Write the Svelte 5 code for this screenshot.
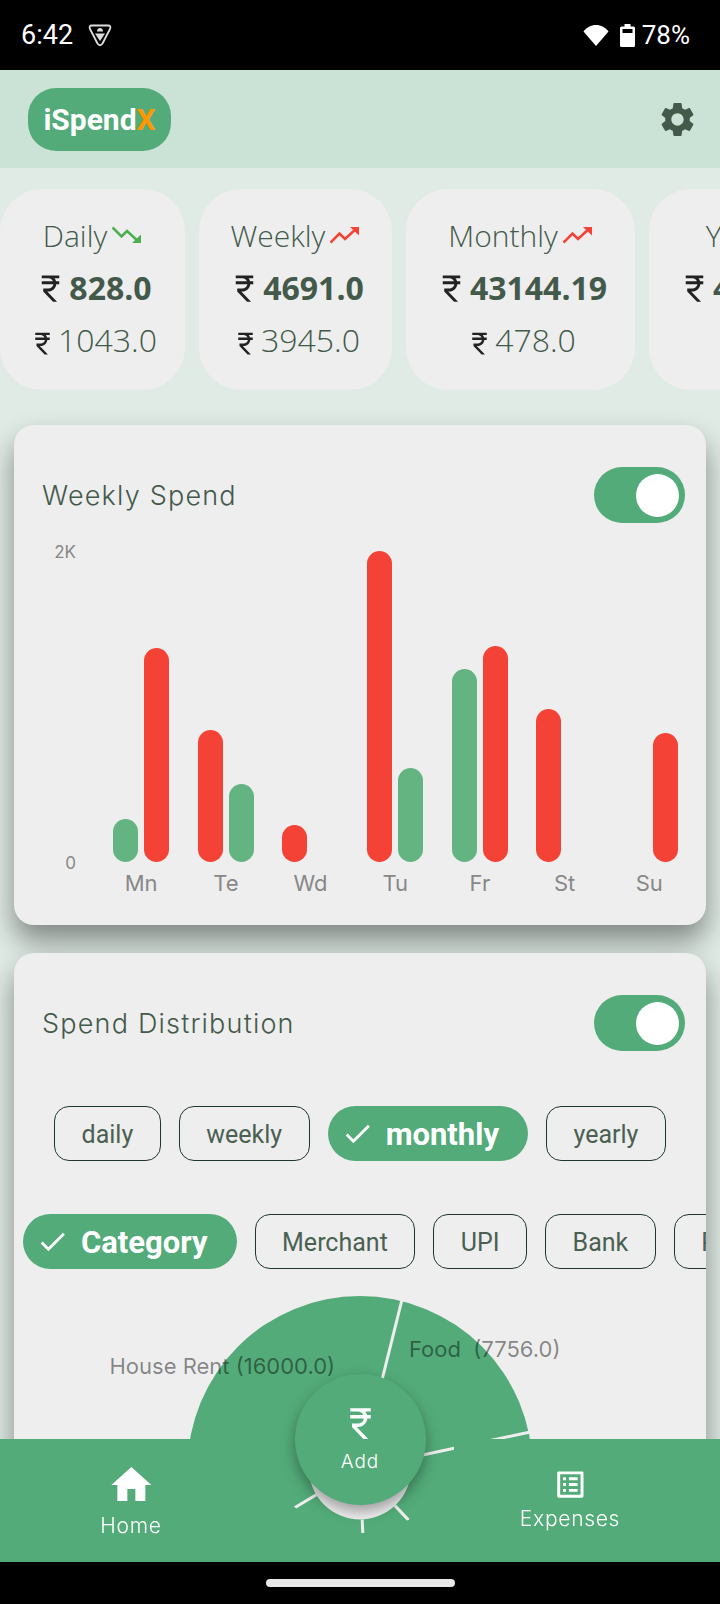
<script lang="ts">
	const stats = [
		{ name: 'Daily', value: '828.0', prev: '1043.0', up: false, width: 185 },
		{ name: 'Weekly', value: '4691.0', prev: '3945.0', up: true, width: 193 },
		{ name: 'Monthly', value: '43144.19', prev: '478.0', up: true, width: 229 },
		{ name: 'Yearly', value: '43144.19', prev: '0.0', up: true, width: 229 }
	];

	// pixel heights of [first, second] bar; null = no bar drawn
	const days = [
		{ label: 'Mn', bars: [{ h: 43, c: 'g' }, { h: 214, c: 'r' }] },
		{ label: 'Te', bars: [{ h: 132, c: 'r' }, { h: 78, c: 'g' }] },
		{ label: 'Wd', bars: [{ h: 37, c: 'r' }, null] },
		{ label: 'Tu', bars: [{ h: 311, c: 'r' }, { h: 94, c: 'g' }] },
		{ label: 'Fr', bars: [{ h: 193, c: 'g' }, { h: 216, c: 'r' }] },
		{ label: 'St', bars: [{ h: 153, c: 'r' }, null] },
		{ label: 'Su', bars: [null, { h: 129, c: 'r' }] }
	];

	const periods = ['daily', 'weekly', 'monthly', 'yearly'];
	const groups = ['Category', 'Merchant', 'UPI', 'Bank', 'Payment'];

	// pie spokes, as directions from the centre
	const spokes = [
		[41.7, -167.7],
		[170, -36.5],
		[48, 51],
		[2.5, 58],
		[-65, 39]
	];
	const cx = 346;
	const cy = 172.5;
	function spoke(d: number[], r: number) {
		const len = Math.hypot(d[0], d[1]);
		return { x: cx + (d[0] / len) * r, y: cy + (d[1] / len) * r };
	}
</script>

{#snippet rupee(size)}
	<svg class="rupee" width={size} height={size} viewBox="0 0 24 24" fill="currentColor">
		<path d="M13.66 7C13.1 5.82 11.9 5 10.5 5H6V3h12v2h-3.26c.48.58.84 1.26 1.05 2H18v2h-2.02c-.25 2.8-2.61 5-5.48 5h-.73l6.73 7h-2.77L7 14v-2h3.5c1.76 0 3.22-1.31 3.46-3H6V7h7.66z" />
	</svg>
{/snippet}

{#snippet check()}
	<svg class="check" width="33" height="33" viewBox="0 0 24 24" fill="#fff">
		<path d="M9 16.17L4.83 12l-1.42 1.41L9 19 21 7l-1.41-1.41z" />
	</svg>
{/snippet}

{#snippet toggle()}
	<div class="toggle"><span class="knob"></span></div>
{/snippet}

<div class="phone">
	<div class="status">
		<div class="status-left">
			<span class="clock">6:42</span>
			<svg width="24" height="24" viewBox="0 0 24 24" fill="none" stroke="#ddd" stroke-width="1.8" stroke-linejoin="round">
				<path d="M4 2.5H20Q23.5 2.5 22 6L14.5 20.5Q12 24 9.5 20.5L2 6Q0.5 2.5 4 2.5Z" />
				<path d="M7 10.5h10L12 18z" fill="#ddd" stroke="none" />
				<path d="M9 8.5Q9 5 12 5t3 3.5z" fill="#ddd" stroke="none" />
			</svg>
		</div>
		<div class="status-right">
			<svg width="26" height="21" viewBox="0 0 26 21" fill="#fff">
				<path d="M13 21 0.5 6.5C3.5 2.5 8 0 13 0s9.5 2.5 12.5 6.5z" />
			</svg>
			<svg class="battery" width="15" height="23" viewBox="0 0 15 23">
				<path d="M4.5 0h6v2.5h3a1.5 1.5 0 0 1 1.5 1.5v17.5a1.5 1.5 0 0 1-1.5 1.5h-12A1.5 1.5 0 0 1 0 21.5V4a1.5 1.5 0 0 1 1.5-1.5h3z" fill="#fff" />
				<rect x="2.5" y="5" width="10" height="4" fill="#000" />
			</svg>
			<span class="pct">78%</span>
		</div>
	</div>

	<header class="header">
		<div class="logo">iSpend<span>X</span></div>
		<svg class="gear" width="41" height="41" viewBox="0 0 24 24" fill="currentColor">
			<path d="M19.14 12.94c.04-.3.06-.61.06-.94 0-.32-.02-.64-.07-.94l2.03-1.58c.18-.14.23-.41.12-.61l-1.92-3.32c-.12-.22-.37-.29-.59-.22l-2.39.96c-.5-.38-1.03-.7-1.62-.94l-.36-2.54c-.04-.24-.24-.41-.48-.41h-3.84c-.24 0-.43.17-.47.41l-.36 2.54c-.59.24-1.13.57-1.62.94l-2.39-.96c-.22-.08-.47 0-.59.22L2.74 8.87c-.12.21-.08.47.12.61l2.03 1.58c-.05.3-.09.63-.09.94s.02.64.07.94l-2.03 1.58c-.18.14-.23.41-.12.61l1.92 3.32c.12.22.37.29.59.22l2.39-.96c.5.38 1.03.7 1.62.94l.36 2.54c.05.24.24.41.48.41h3.84c.24 0 .44-.17.47-.41l.36-2.54c.59-.24 1.13-.56 1.62-.94l2.39.96c.22.08.47 0 .59-.22l1.92-3.32c.12-.22.07-.47-.12-.61l-2.01-1.58zM12 15.6c-1.98 0-3.6-1.62-3.6-3.6s1.62-3.6 3.6-3.6 3.6 1.62 3.6 3.6-1.62 3.6-3.6 3.6z" />
		</svg>
	</header>

	<main class="main">
		<div class="stats">
			{#each stats as s}
				<div class="stat" style="width: {s.width}px">
					<div class="stat-name">
						{s.name}
						{#if s.up}
							<svg width="30" height="18" viewBox="0 0 30 18" fill="none" stroke="#f44336" stroke-width="2.6">
								<path d="M0.5 16.5 9.5 7.5l5.5 5.5L27 2" />
								<path d="M20 1h9v8.5z" fill="#f44336" stroke="none" />
							</svg>
						{:else}
							<svg width="30" height="18" viewBox="0 0 30 18" fill="none" stroke="#4caf50" stroke-width="2.6">
								<path d="M0.5 1.5 9.5 10.5l5.5-5.5L27 16" />
								<path d="M20 17h9V8.5z" fill="#4caf50" stroke="none" />
							</svg>
						{/if}
					</div>
					<div class="stat-value">{@render rupee(35)}<span>{s.value}</span></div>
					<div class="stat-prev">{@render rupee(29)}<span>{s.prev}</span></div>
				</div>
			{/each}
		</div>

		<section class="card">
			<div class="card-head">
				<h2>Weekly Spend</h2>
				{@render toggle()}
			</div>
			<div class="chart">
				<div class="y-axis">
					<span>2K</span>
					<span>0</span>
				</div>
				<div class="days">
					{#each days as d}
						<div class="day">
							<div class="bars">
								{#each d.bars as b}
									{#if b}
										<span class="bar {b.c}" style="height: {b.h}px"></span>
									{:else}
										<span class="bar"></span>
									{/if}
								{/each}
							</div>
							<span class="day-label">{d.label}</span>
						</div>
					{/each}
				</div>
			</div>
		</section>

		<section class="card dist">
			<div class="card-head">
				<h2>Spend Distribution</h2>
				{@render toggle()}
			</div>
			<div class="chips centered">
				{#each periods as p}
					<div class="chip" class:on={p === 'monthly'}>
						{#if p === 'monthly'}{@render check()}{/if}
						{p}
					</div>
				{/each}
			</div>
			<div class="chips scroller">
				{#each groups as g}
					<div class="chip" class:on={g === 'Category'}>
						{#if g === 'Category'}{@render check()}{/if}
						{g}
					</div>
				{/each}
			</div>
			<div class="pie">
				<svg width="692" height="270" viewBox="0 0 692 270">
					<path
						fill="#53ab79"
						fill-rule="evenodd"
						d="M{cx - 172.5} {cy}a172.5 172.5 0 1 0 345 0a172.5 172.5 0 1 0 -345 0zM{cx - 51} {cy}a51 51 0 1 0 102 0a51 51 0 1 0 -102 0z"
					/>
					{#each spokes as d}
						{@const a = spoke(d, 51)}
						{@const b = spoke(d, 173)}
						<line x1={a.x} y1={a.y} x2={b.x} y2={b.y} stroke="#eee" stroke-width="3" />
					{/each}
					<text x="95.5" y="78" class="pie-label">House Rent (16000.0)</text>
					<text x="395" y="61" class="pie-label">Food  (7756.0)</text>
				</svg>
			</div>
		</section>

		<nav class="nav">
			<div class="nav-item home">
				<svg width="48" height="48" viewBox="0 0 24 24" fill="#fff"><path d="M10 20v-6h4v6h5v-8h3L12 3 2 12h3v8z" /></svg>
				<span>Home</span>
			</div>
			<div class="nav-item expenses">
				<svg width="35" height="35" viewBox="0 0 24 24" fill="#fff"><path d="M19 5v14H5V5h14m1.1-2H3.9c-.5 0-.9.4-.9.9v16.2c0 .4.4.9.9.9h16.2c.4 0 .9-.5.9-.9V3.9c0-.5-.5-.9-.9-.9zM11 7h6v2h-6V7zm0 4h6v2h-6v-2zm0 4h6v2h-6zM7 7h2v2H7zm0 4h2v2H7zm0 4h2v2H7z" /></svg>
				<span>Expenses</span>
			</div>
		</nav>

		<div class="fab">
			{@render rupee(41)}
			<span>Add</span>
		</div>
	</main>

	<div class="gesture"><span class="handle"></span></div>
</div>

<style>
	:global(body) {
		margin: 0;
		background: #000;
	}

	.phone {
		width: 720px;
		height: 1604px;
		display: flex;
		flex-direction: column;
		overflow: hidden;
		font-family: 'Inter', sans-serif;
	}

	.status {
		height: 70px;
		flex: none;
		background: #000;
		color: #fff;
		display: flex;
		justify-content: space-between;
		align-items: center;
		padding: 0 30px 0 21px;
		box-sizing: border-box;
	}

	.status-left,
	.status-right {
		display: flex;
		align-items: center;
	}

	.clock {
		font: 400 27px 'Roboto', sans-serif;
		margin-right: 15px;
	}

	.battery {
		margin: 0 7px 0 11px;
	}

	.pct {
		font: 400 26px 'Roboto', sans-serif;
	}

	.header {
		height: 98px;
		flex: none;
		background: #cbe2d6;
		display: flex;
		justify-content: space-between;
		align-items: center;
		padding: 0 22px 0 28px;
		box-sizing: border-box;
	}

	.logo {
		width: 143px;
		height: 63px;
		border-radius: 28px;
		background: #53ab79;
		color: #fff;
		font: 700 30px 'Roboto', sans-serif;
		display: flex;
		align-items: center;
		justify-content: center;
	}

	.logo span {
		color: #ff9800;
	}

	.gear {
		color: #435a4b;
	}

	.main {
		flex: 1;
		min-height: 0;
		position: relative;
		overflow: hidden;
		background: #e0ebe5;
	}

	.stats {
		display: flex;
		gap: 14px;
		padding-top: 21px;
		height: 201px;
		margin-bottom: 35px;
	}

	.stat {
		flex: none;
		height: 201px;
		border-radius: 42px;
		background: #eee;
		display: flex;
		flex-direction: column;
		align-items: center;
		font-family: 'Open Sans', sans-serif;
		color: #435a4b;
	}

	.stat-name {
		display: flex;
		align-items: center;
		gap: 5px;
		height: 38px;
		margin-top: 27px;
		font-size: 30px;
		font-weight: 300;
		white-space: nowrap;
	}

	.stat-value {
		display: flex;
		align-items: center;
		height: 40px;
		margin-top: 13px;
		font-size: 32px;
		font-weight: 700;
		white-space: nowrap;
	}

	.stat-prev {
		display: flex;
		align-items: center;
		height: 40px;
		margin-top: 12px;
		font-size: 32px;
		font-weight: 300;
		white-space: nowrap;
	}

	.stat-value span,
	.stat-prev span {
		margin-left: 1px;
	}

	.stat-value .rupee {
		transform: translateY(1px);
	}

	.stat-prev .rupee {
		transform: translateY(4px);
	}

	.rupee {
		color: #222;
		flex: none;
	}

	.card {
		margin: 0 14px 28px;
		background: #eee;
		border-radius: 20px;
		height: 500px;
		box-sizing: border-box;
		padding: 42px 21px 0 28px;
		box-shadow: 0 16px 28px rgba(0, 0, 0, 0.42);
	}

	.dist {
		height: 680px;
		padding: 42px 0 0 0;
		overflow: hidden;
	}

	.card-head {
		display: flex;
		justify-content: space-between;
		align-items: center;
		height: 56px;
	}

	.dist .card-head {
		padding: 0 21px 0 28px;
	}

	h2 {
		margin: 0;
		font-size: 27px;
		font-weight: 300;
		color: #435a4b;
		letter-spacing: 1.2px;
	}

	.toggle {
		width: 91px;
		height: 56px;
		border-radius: 28px;
		background: #53ab79;
		position: relative;
	}

	.knob {
		position: absolute;
		top: 7px;
		right: 6px;
		width: 43px;
		height: 43px;
		border-radius: 50%;
		background: #fff;
	}

	.chart {
		display: flex;
		margin: 28px -6px 0 -3px;
	}

	.y-axis {
		width: 37px;
		height: 331px;
		margin-top: -9px;
		display: flex;
		flex-direction: column;
		justify-content: space-between;
		align-items: flex-end;
		font-size: 17px;
		color: #888;
		flex: none;
	}

	.days {
		margin-left: 22.8px;
		display: grid;
		grid-template-columns: repeat(7, 84.7px);
	}

	.day {
		display: flex;
		flex-direction: column;
		align-items: center;
	}

	.bars {
		height: 311px;
		display: flex;
		align-items: flex-end;
		gap: 6.5px;
	}

	.bar {
		width: 25px;
		border-radius: 13px;
	}

	.bar.r {
		background: #f44336;
	}

	.bar.g {
		background: #64b482;
	}

	.day-label {
		margin-top: 8px;
		font-size: 22px;
		color: #888;
	}

	.chips {
		display: flex;
		gap: 18px;
		height: 55px;
	}

	.centered {
		justify-content: center;
		margin-top: 55px;
	}

	.scroller {
		margin-top: 53px;
		padding-left: 9px;
	}

	.chip {
		flex: none;
		height: 55px;
		box-sizing: border-box;
		padding: 2px 26.5px 0;
		border: 1.6px solid #22372b;
		border-radius: 15px;
		display: flex;
		align-items: center;
		font: 400 25px 'Roboto', sans-serif;
		color: #4a6152;
	}

	.chip.on {
		border: none;
		border-radius: 28px;
		background: #53ab79;
		color: #fff;
		font-weight: 700;
		font-size: 31px;
		padding: 2px 29px 0 13px;
	}

	.check {
		margin: -2px 12px 0 0;
	}

	.pie {
		margin-top: 27px;
		height: 270px;
	}

	.pie-label {
		font-size: 22px;
		fill: rgba(0, 0, 0, 0.45);
		white-space: pre;
	}

	.nav {
		position: absolute;
		left: 0;
		right: 0;
		bottom: 0;
		height: 123px;
		background: #53ab79;
		mask: radial-gradient(circle 94px at 360px 0, transparent 94px, #000 94.5px);
		color: #fff;
	}

	.nav-item {
		position: absolute;
		display: flex;
		flex-direction: column;
		align-items: center;
		transform: translateX(-50%);
		font-size: 21px;
		font-weight: 300;
		letter-spacing: 0.7px;
	}

	.home {
		left: 131px;
		top: 22px;
		gap: 4px;
	}

	.expenses {
		left: 570px;
		top: 28px;
		gap: 4px;
	}

	.fab {
		position: absolute;
		left: 294.5px;
		bottom: 57.5px;
		width: 131px;
		height: 131px;
		border-radius: 50%;
		background: #53ab79;
		box-shadow: 0 6px 14px rgba(0, 0, 0, 0.35);
		display: flex;
		flex-direction: column;
		align-items: center;
		color: #fff;
		font-size: 19px;
		font-weight: 300;
		letter-spacing: 1px;
		padding-top: 29px;
		box-sizing: border-box;
	}

	.fab .rupee {
		color: #fff;
	}

	.fab span {
		margin-top: 6px;
	}

	.gesture {
		height: 42px;
		flex: none;
		background: #000;
		display: flex;
		justify-content: center;
		padding-top: 17px;
		box-sizing: border-box;
	}

	.handle {
		width: 189px;
		height: 8px;
		border-radius: 4px;
		background: #e8e8e8;
	}
</style>
